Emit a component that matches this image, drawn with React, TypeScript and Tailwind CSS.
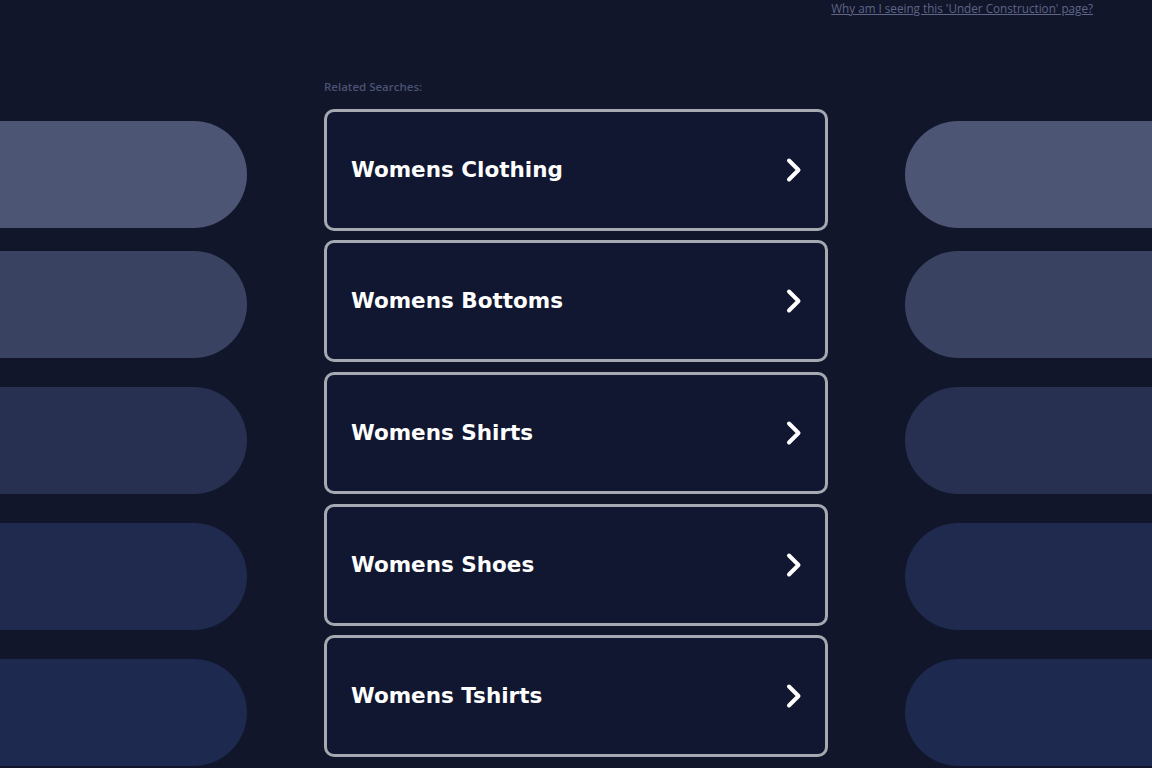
import React from "react";

const items = [
  { label: "Womens Clothing", mt: "mt-0" },
  { label: "Womens Bottoms", mt: "mt-[9px]" },
  { label: "Womens Shirts", mt: "mt-[10px]" },
  { label: "Womens Shoes", mt: "mt-[10px]" },
  { label: "Womens Tshirts", mt: "mt-[9px]" },
];

const pills = [
  { c: "bg-[#4d5574]", mt: "mt-0" },
  { c: "bg-[#3a4262]", mt: "mt-[23px]" },
  { c: "bg-[#283051]", mt: "mt-[29px]" },
  { c: "bg-[#1f2a4e]", mt: "mt-[29px]" },
  { c: "bg-[#1e2950]", mt: "mt-[29px]" },
];

function Chevron() {
  return (
    <svg width="18" height="26" viewBox="0 0 18 26" fill="none">
      <path d="M4 3.5 L13.5 13 L4 22.5" stroke="#ffffff" strokeWidth="4" strokeLinecap="round" strokeLinejoin="round" />
    </svg>
  );
}

export default function App() {
  return (
    <div className="h-[768px] w-[1152px] overflow-hidden bg-[#11162b]" style={{ fontFamily: '"DejaVu Sans", Verdana, sans-serif' }}>
      <div className="flex h-[20px] justify-end pr-[59px] pt-[1px]">
        <a
          href="#"
          className="text-[11.7px] leading-[14px] text-[#5f6587] underline"
          style={{ fontFamily: '"Open Sans", "Liberation Sans", sans-serif' }}
        >
          Why am I seeing this 'Under Construction' page?
        </a>
      </div>
      <div className="flex">
        <div className="flex w-[247px] flex-col pt-[101px]">
          {pills.map((p, i) => (
            <div key={i} className={`${p.mt} h-[107px] w-[247px] rounded-r-[54px] ${p.c}`} />
          ))}
        </div>
        <div className="ml-[77px] flex w-[504px] flex-col">
          <div
            className="mt-[60px] h-[14px] text-[11.5px] leading-[14px] font-semibold text-[#4b5274]"
            style={{ fontFamily: '"Open Sans", "Liberation Sans", sans-serif' }}
          >
            Related Searches:
          </div>
          <div className="mt-[15px] flex flex-col">
            {items.map((it) => (
              <div
                key={it.label}
                className={`${it.mt} flex h-[122px] items-center justify-between rounded-[10px] border-[3px] border-[#a6a8b2] bg-[#111730] pl-[24px] pr-[22px]`}
              >
                <span className="text-[21.5px] leading-[26px] font-bold text-white">{it.label}</span>
                <Chevron />
              </div>
            ))}
          </div>
        </div>
        <div className="ml-[77px] flex flex-1 flex-col pt-[101px]">
          {pills.map((p, i) => (
            <div key={i} className={`${p.mt} h-[107px] w-[247px] rounded-l-[54px] ${p.c}`} />
          ))}
        </div>
      </div>
    </div>
  );
}
